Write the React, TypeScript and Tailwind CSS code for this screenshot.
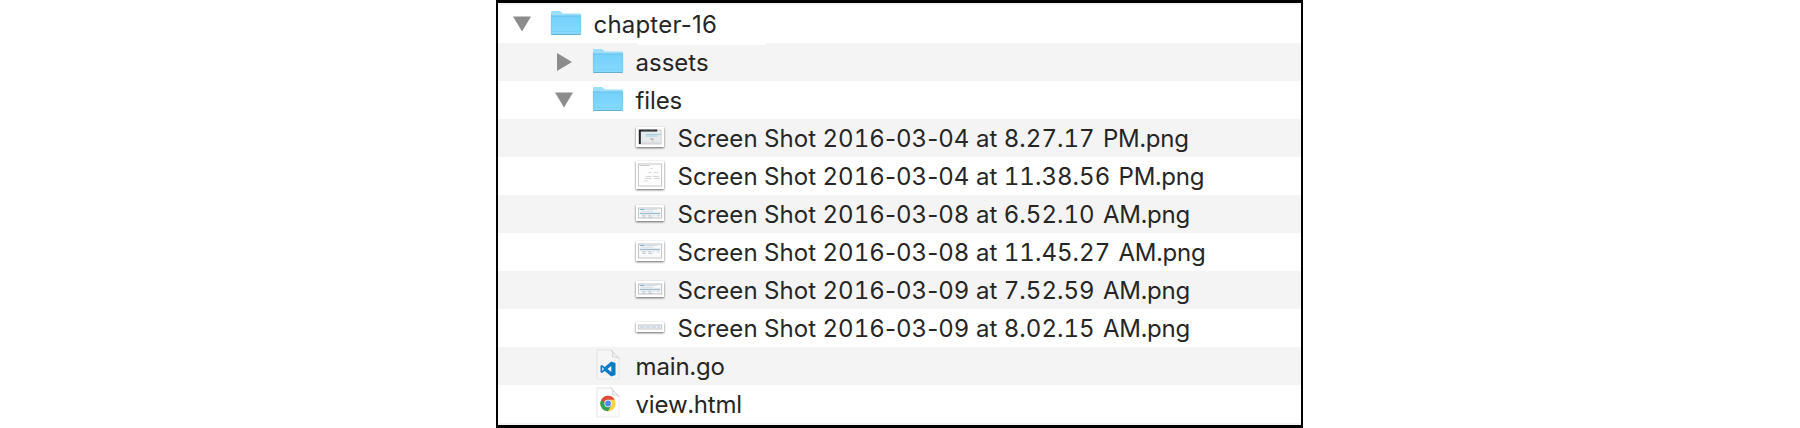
import React from "react";

type Art = "terminal" | "form" | "table";

function FolderIcon() {
  return (
    <svg width="32" height="26" viewBox="0 0 32 26" className="mb-0.5 block">
      <defs>
        <linearGradient id="folder" x1="0" y1="0" x2="0" y2="1">
          <stop offset="0" stopColor="#74d0fb" />
          <stop offset="1" stopColor="#86daff" />
        </linearGradient>
      </defs>
      <path d="M1 2.2Q1 1 2.2 1H9.4Q10.2 1 10.8 1.6L12 3Q12.5 3.500 13.300 3.500H29.800Q31 3.500 31 4.700V8H1Z" fill="#9adff9" />
      <path d="M1 6H31V23.300Q31 24.500 29.800 24.500H2.200Q1 24.500 1 23.300Z" fill="url(#folder)" />
      <path d="M1 6H31" stroke="#69bfe6" strokeWidth="1" />
      <path d="M1.500 21.500H30.500" stroke="#79cdf3" strokeWidth="0.700" />
      <path d="M1.300 24.500H30.700" stroke="#67afd0" strokeWidth="1" />
      <path d="M1.300 5V24M30.700 5V24" stroke="#71c4e8" strokeWidth="0.600" />
    </svg>
  );
}

function Thumb({ height, art }: { height: number; art: Art }) {
  const b = height - 3;
  return (
    <svg width="28" height={height} viewBox={`0 0 29 ${height}`} preserveAspectRatio="none" className="mb-0.5 block overflow-visible drop-shadow-[0_1px_1px_rgba(0,0,0,0.6)]">
      <rect width="29" height={height} rx="0.500" fill="#fff" />
      {art === "terminal" && (
        <g>
          <rect x="3" y="3" width="23" height={b - 3} fill="#e6eaec" stroke="#b5b5b5" strokeWidth="0.600" />
          <path d={`M3 2.500H22V4.500H5V${b}H3Z`} fill="#222529" />
          <path d="M7 4H12M14 4H20" stroke="#66707a" strokeWidth="0.800" />
          <path d="M10 7.500H25M10 9H22" stroke="#a6d0e0" strokeWidth="1.200" />
          <path d="M15 12H18M17 14H18" stroke="#777" strokeWidth="0.800" />
          <path d={`M6 ${b - 1}H25`} stroke="#d3d5d6" />
        </g>
      )}
      {art === "form" && (
        <g>
          <rect x="2.500" y="3" width="24" height={b - 3} fill="#fdfdfd" stroke="#c6c6c6" strokeWidth="1" />
          <path d="M4 4.500H14" stroke="#bdbdbd" strokeWidth="0.800" />
          <path d="M15 7.500H17M13 11.500H16M19 11.500H23M10 15.500H16M18 15.500H24M9 17.500H16M19 17.500H25M8 20H12" stroke="#d0d0d0" strokeWidth="0.900" />
        </g>
      )}
      {art === "table" && (
        <g>
          <rect x="2.500" y="3" width="24" height={b - 3} fill="#f7f9fa" stroke="#c0c3c5" strokeWidth="1" />
          {height > 12 ? (
            <g>
              <path d="M4 4.500H9" stroke="#83afd0" strokeWidth="1" />
              <path d="M10 4.500H22M5 6.200H18" stroke="#c9d5dd" strokeWidth="0.800" />
              <path d="M4 8.500H25" stroke="#a2bdd0" strokeWidth="1.500" />
              <path d="M6 10.800H10M12 10.800H16M18 10.800H19M22 10.800H24M7 12.300H10M13 12.300H17" stroke="#b7c0c8" strokeWidth="0.900" />
            </g>
          ) : (
            <path d="M4 5H25" stroke="#a9bdcc" strokeWidth="1.200" strokeDasharray="5 1" />
          )}
        </g>
      )}
    </svg>
  );
}

function Page({ children, tint }: { children: React.ReactNode; tint: string }) {
  return (
    <svg width="24" height="31" viewBox="0 0 24 31" className="mb-1 block">
      <path d="M1 1H15L23 9.500V30H1Z" fill={tint} />
      <path d="M1 30V1H15" fill="none" stroke="#d9d9d9" strokeWidth="0.700" />
      <path d="M1 30H23V9.500" fill="none" stroke="#e4e4e4" strokeWidth="0.700" />
      <path d="M15 0.800Q17.500 3 16.500 8Q20 7.200 23.200 9.500Z" fill="#f1f1f1" stroke="#cbcbcb" strokeWidth="0.700" />
      {children}
    </svg>
  );
}

function GoFileIcon() {
  return (
    <Page tint="#f6f6f6">
      <path fillRule="evenodd" fill="#0a7ac4" d="M15.300 12.500L19.500 14V26L15.300 27.500L8.700 22L6 24L4.500 23.300V16.700L6 16L8.700 18ZM15.300 17L11.500 20L15.300 23ZM6.200 18V22L8 20Z" />
    </Page>
  );
}

function HtmlFileIcon() {
  return (
    <Page tint="#fdfdfd">
      <circle cx="12" cy="16.500" r="7.700" fill="#ffd24a" />
      <path d="M5.330 12.650A7.700 7.700 0 0 0 12 24.200L15.400 18.400L12 16.500Z" fill="#2fa15b" />
      <path d="M5.330 12.650A7.700 7.700 0 0 1 18.670 12.650H12A3.850 3.850 0 0 0 8.300 16.500Z" fill="#e0483b" />
      <circle cx="12" cy="16.500" r="3.700" fill="#f5f5f5" />
      <circle cx="12" cy="16.500" r="2.900" fill="#4a8bf0" />
    </Page>
  );
}

function Arrow({ open }: { open: boolean }) {
  return (
    <svg width="18" height="18" viewBox="0 0 18 18" className="block">
      <path d={open ? "M0 1.500H18L9 16.500Z" : "M2 0L17 9L2 18Z"} fill="#8c8c8c" />
    </svg>
  );
}

interface RowProps {
  name: string;
  suffix?: string;
  icon: React.ReactNode;
  indent: string;
  text: string;
  arrow?: React.ReactNode;
  shaded?: boolean;
}

function Row({ name, suffix, icon, indent, text, arrow, shaded }: RowProps) {
  return (
    <div className={`flex h-[38px] shrink-0 items-center ${indent} ${shaded ? "bg-[#f4f4f4]" : "bg-white"}`}>
      <div className="w-[18px] shrink-0">{arrow}</div>
      <div className="ml-[19px] flex w-8 shrink-0 justify-center">{icon}</div>
      <span className={`ml-[11.5px] whitespace-pre pt-0.5 text-[24px] font-[440] leading-[38px] ${text}`}>
        {name.split("-").map((part, i) => (
          <React.Fragment key={i}>
            {i > 0 && <span className="proportional-nums">-</span>}
            {part}
          </React.Fragment>
        ))}
        {suffix && <span className="ml-[2px] tracking-[-0.2px]"> {suffix}</span>}
      </span>
    </div>
  );
}

export default function App() {
  return (
    <div className="flex h-[428px] w-[1800px] bg-white pl-[496px] font-['Inter',sans-serif] text-[#262626]">
      <div className="relative flex w-[807px] flex-col border-x-2 border-y-[3px] border-black bg-[#f4f4f6] pt-0.5">
        <Row indent="pl-[15px]" name="chapter-16" text="proportional-nums tracking-[0.2px]" arrow={<Arrow open />} icon={<FolderIcon />} />
        <Row indent="pl-[57px]" name="assets" text="tabular-nums" arrow={<Arrow open={false} />} icon={<FolderIcon />} shaded />
        <Row indent="pl-[57px]" name="files" text="tabular-nums tracking-[-0.1px]" arrow={<Arrow open />} icon={<FolderIcon />} />
        <Row indent="pl-[99px]" name="Screen Shot 2016-03-04 at 8.27.17" suffix="PM.png" text="tabular-nums tracking-[0.03px]" icon={<Thumb height={20} art="terminal" />} shaded />
        <Row indent="pl-[99px]" name="Screen Shot 2016-03-04 at 11.38.56" suffix="PM.png" text="tabular-nums tracking-[0.03px]" icon={<Thumb height={28} art="form" />} />
        <Row indent="pl-[99px]" name="Screen Shot 2016-03-08 at 6.52.10" suffix="AM.png" text="tabular-nums tracking-[0.03px]" icon={<Thumb height={16} art="table" />} shaded />
        <Row indent="pl-[99px]" name="Screen Shot 2016-03-08 at 11.45.27" suffix="AM.png" text="tabular-nums tracking-[0.03px]" icon={<Thumb height={20} art="table" />} />
        <Row indent="pl-[99px]" name="Screen Shot 2016-03-09 at 7.52.59" suffix="AM.png" text="tabular-nums tracking-[0.03px]" icon={<Thumb height={16} art="table" />} shaded />
        <Row indent="pl-[99px]" name="Screen Shot 2016-03-09 at 8.02.15" suffix="AM.png" text="tabular-nums tracking-[0.03px]" icon={<Thumb height={10} art="table" />} />
        <Row indent="pl-[57px]" name="main.go" text="tabular-nums tracking-[-0.1px]" icon={<GoFileIcon />} shaded />
        <Row indent="pl-[57px]" name="view.html" text="tabular-nums tracking-[-0.15px]" icon={<HtmlFileIcon />} />
        <div className="absolute left-[140px] top-10 h-0.5 w-32 bg-white" />
      </div>
    </div>
  );
}
